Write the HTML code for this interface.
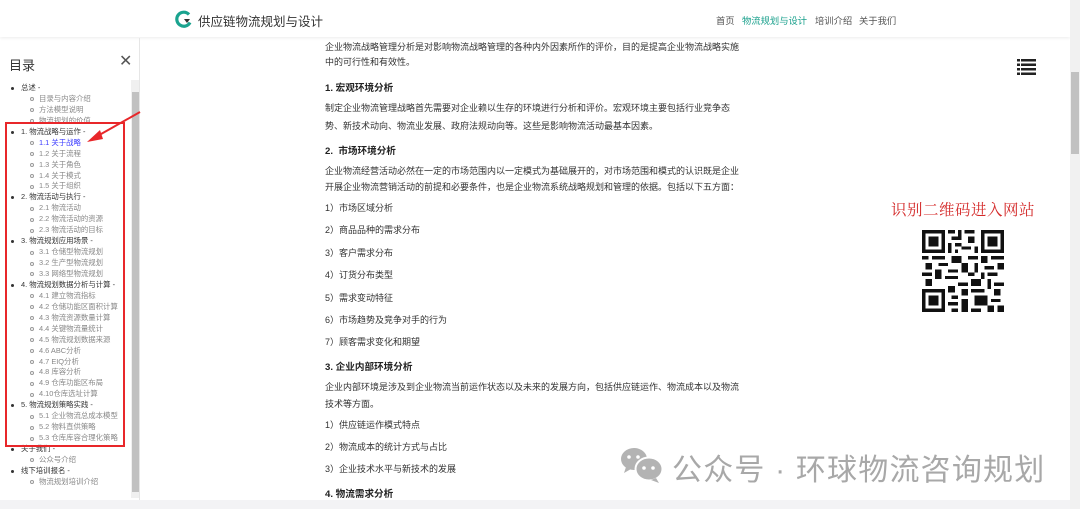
<!DOCTYPE html>
<html><head><meta charset="utf-8"><style>
*{margin:0;padding:0;box-sizing:border-box}
body{width:1080px;height:509px;overflow:hidden;background:#fff;font-family:"Liberation Sans","Noto Sans CJK SC",sans-serif;position:relative;color:#333}
.a{position:absolute;white-space:nowrap}
.hdr{position:absolute;left:0;top:0;width:1070px;height:37px;background:#fff;box-shadow:0 1px 3px rgba(0,0,0,.08)}
.t{font-size:9px;line-height:12px;color:#333}
.h{font-size:9.6px;font-weight:bold;color:#222}
.s{font-size:7.4px;line-height:10px}
.s1{color:#333}
.dot{position:absolute;width:3px;height:3px;border-radius:50%;background:#333}
.cir{position:absolute;width:4px;height:4px;border-radius:50%;border:1px solid #999}
</style></head><body>
<div class="hdr"></div>
<svg class="a" style="left:175px;top:10px" width="18" height="18" viewBox="0 0 18 18"><path d="M14 4.5A7 7 0 1 0 15 12.5" fill="none" stroke="#1aa38f" stroke-width="3.2"/><path d="M9 9h6l-3 4z" fill="#333"/></svg>
<div class="a" style="left:198px;top:11px;font-size:12.5px;color:#333">供应链物流规划与设计</div>
<div class="a" style="left:716px;top:13px;font-size:9.3px;color:#555">首页</div>
<div class="a" style="left:742px;top:13px;font-size:9.3px;color:#19a08c">物流规划与设计</div>
<div class="a" style="left:815px;top:13px;font-size:9.3px;color:#555">培训介绍</div>
<div class="a" style="left:859px;top:13px;font-size:9.3px;color:#555">关于我们</div>

<!-- sidebar -->
<div class="a" style="left:139px;top:38px;width:1px;height:462px;background:#e6e6e6"></div>
<div class="a" style="left:9px;top:55px;font-size:13px;color:#333">目录</div>
<div class="a" style="left:119px;top:54px;font-size:16px;color:#555;line-height:16px">✕</div>
<div class="a" style="left:131px;top:80px;width:8px;height:418px;background:#f0f0f0"></div>
<div class="a" style="left:132px;top:92px;width:7px;height:400px;background:#c1c1c1"></div>
<div id="toc"></div>
<div class="a" style="left:5px;top:122px;width:120px;height:325px;border:2px solid #e8272a"></div>
<svg class="a" style="left:84px;top:108px" width="60" height="40"><line x1="56" y1="4" x2="10" y2="30" stroke="#e8272a" stroke-width="2"/><path d="M3 34 L16 22 L19 31 Z" fill="#e8272a"/></svg>

<!-- main -->
<div class="a t" style="left:325px;top:41px">企业物流战略管理分析是对影响物流战略管理的各种内外因素所作的评价，目的是提高企业物流战略实施</div>
<div class="a t" style="left:325px;top:56px">中的可行性和有效性。</div>
<div class="a h" style="left:325px;top:80px">1. 宏观环境分析</div>
<div class="a t" style="left:325px;top:102px">制定企业物流管理战略首先需要对企业赖以生存的环境进行分析和评价。宏观环境主要包括行业竞争态</div>
<div class="a t" style="left:325px;top:120px">势、新技术动向、物流业发展、政府法规动向等。这些是影响物流活动最基本因素。</div>
<div class="a h" style="left:325px;top:143px">2. &nbsp;市场环境分析</div>
<div class="a t" style="left:325px;top:165px">企业物流经营活动必然在一定的市场范围内以一定模式为基础展开的，对市场范围和模式的认识既是企业</div>
<div class="a t" style="left:325px;top:181px">开展企业物流营销活动的前提和必要条件，也是企业物流系统战略规划和管理的依据。包括以下五方面：</div>
<div class="a t" style="left:325px;top:202px">1）市场区域分析</div>
<div class="a t" style="left:325px;top:224px">2）商品品种的需求分布</div>
<div class="a t" style="left:325px;top:247px">3）客户需求分布</div>
<div class="a t" style="left:325px;top:269px">4）订货分布类型</div>
<div class="a t" style="left:325px;top:292px">5）需求变动特征</div>
<div class="a t" style="left:325px;top:314px">6）市场趋势及竞争对手的行为</div>
<div class="a t" style="left:325px;top:336px">7）顾客需求变化和期望</div>
<div class="a h" style="left:325px;top:359px">3. 企业内部环境分析</div>
<div class="a t" style="left:325px;top:381px">企业内部环境是涉及到企业物流当前运作状态以及未来的发展方向，包括供应链运作、物流成本以及物流</div>
<div class="a t" style="left:325px;top:398px">技术等方面。</div>
<div class="a t" style="left:325px;top:419px">1）供应链运作模式特点</div>
<div class="a t" style="left:325px;top:441px">2）物流成本的统计方式与占比</div>
<div class="a t" style="left:325px;top:463px">3）企业技术水平与新技术的发展</div>
<div class="a h" style="left:325px;top:486px">4. 物流需求分析</div>

<!-- right -->
<svg class="a" style="left:1017px;top:59px" width="19" height="16"><g fill="#222"><rect x="0" y="0" width="3" height="2.5"/><rect x="4" y="0" width="15" height="2.5"/><rect x="0" y="4.5" width="3" height="2.5"/><rect x="4" y="4.5" width="15" height="2.5"/><rect x="0" y="9" width="3" height="2.5"/><rect x="4" y="9" width="15" height="2.5"/><rect x="0" y="13.5" width="3" height="2.5"/><rect x="4" y="13.5" width="15" height="2.5"/></g></svg>
<div class="a" style="left:891px;top:198px;font-size:15.5px;color:#d42a2a;font-family:'Liberation Serif','Noto Serif CJK SC',serif;letter-spacing:0.5px">识别二维码进入网站</div>
<svg class="a" style="left:922px;top:230px" width="82" height="82" viewBox="0 0 25 25" shape-rendering="crispEdges">
<rect width="25" height="25" fill="#fff"/>
<g fill="#111"><path d="M0 0h7v7h-7zM18 0h7v7h-7zM0 18h7v7h-7z"/></g>
<g fill="#fff"><path d="M1 1h5v5h-5zM19 1h5v5h-5zM1 19h5v5h-5z"/></g>
<g fill="#111"><path d="M2 2h3v3h-3zM20 2h3v3h-3zM2 20h3v3h-3z"/>
<path d="M8 0h2v1h-2zM11 0h1v2h-1zM13 0h3v1h-3zM9 2h3v1h-3zM14 2h2v2h-2zM8 4h1v3h-1zM10 4h2v1h-2zM12 5h3v1h-3zM16 5h1v2h-1zM10 6h1v1h-1zM0 8h2v1h-2zM3 8h4v1h-4zM9 8h3v2h-3zM14 8h3v1h-3zM18 8h2v2h-2zM21 8h4v1h-4zM1 10h2v2h-2zM5 10h3v1h-3zM12 10h2v3h-2zM16 10h1v3h-1zM19 11h3v1h-3zM23 10h2v2h-2zM0 13h3v1h-3zM4 12h2v3h-2zM8 12h3v1h-3zM14 13h2v1h-2zM18 13h1v2h-1zM20 13h3v1h-3zM1 15h2v2h-2zM7 14h4v1h-4zM11 16h3v1h-3zM15 15h3v2h-3zM20 15h1v3h-1zM22 16h3v1h-3zM8 17h2v2h-2zM12 18h2v2h-2zM15 18h4v1h-4zM22 18h2v2h-2zM9 20h2v1h-2zM16 20h4v3h-4zM17 21h2v1h-2zM21 21h3v1h-3zM8 22h3v1h-3zM12 21h2v4h-2zM9 24h2v1h-2zM15 24h3v1h-3zM20 23h2v2h-2zM23 23h2v2h-2z"/></g>
</svg>
<div class="a" style="left:1070px;top:0;width:10px;height:509px;background:#f1f1f1"></div>
<div class="a" style="left:1071px;top:72px;width:8px;height:82px;background:#c1c1c1"></div>
<div class="a" style="left:0;top:500px;width:1070px;height:9px;background:#f3f3f5"></div>

<!-- watermark -->
<svg class="a" style="left:620px;top:447px" width="44" height="36" viewBox="0 0 44 36"><ellipse cx="14" cy="12" rx="13" ry="11" fill="#b3b3b3"/><path d="M6 20l-2 6 7-4z" fill="#b3b3b3"/><ellipse cx="29" cy="22" rx="13.5" ry="11.5" fill="#b3b3b3" stroke="#fff" stroke-width="2"/><path d="M36 31l3 5-8-3z" fill="#b3b3b3"/><circle cx="9" cy="10" r="1.8" fill="#fff"/><circle cx="18" cy="10" r="1.8" fill="#fff"/><circle cx="24" cy="21" r="1.8" fill="#fff"/><circle cx="33" cy="21" r="1.8" fill="#fff"/></svg>
<div class="a" style="left:672px;top:445px;font-size:30px;color:#a8a8a8;letter-spacing:1.2px">公众号 · 环球物流咨询规划</div>

<script>
var items=[[0,"总述 -"],[1,"目录与内容介绍"],[1,"方法模型说明"],[1,"物流规划的价值"],[0,"1. 物流战略与运作 -"],[2,"1.1 关于战略"],[1,"1.2 关于流程"],[1,"1.3 关于角色"],[1,"1.4 关于模式"],[1,"1.5 关于组织"],[0,"2. 物流活动与执行 -"],[1,"2.1 物流活动"],[1,"2.2 物流活动的资源"],[1,"2.3 物流活动的目标"],[0,"3. 物流规划应用场景 -"],[1,"3.1 仓储型物流规划"],[1,"3.2 生产型物流规划"],[1,"3.3 网络型物流规划"],[0,"4. 物流规划数据分析与计算 -"],[1,"4.1 建立物流指标"],[1,"4.2 仓储功能区面积计算"],[1,"4.3 物流资源数量计算"],[1,"4.4 关键物流量统计"],[1,"4.5 物流规划数据来源"],[1,"4.6 ABC分析"],[1,"4.7 EIQ分析"],[1,"4.8 库容分析"],[1,"4.9 仓库功能区布局"],[1,"4.10仓库选址计算"],[0,"5. 物流规划策略实践 -"],[1,"5.1 企业物流总成本模型"],[1,"5.2 物料直供策略"],[1,"5.3 仓库库容合理化策略"],[0,"关于我们 -"],[1,"公众号介绍"],[0,"线下培训报名 -"],[1,"物流规划培训介绍"]];
var h="";items.forEach(function(it,i){var y=83+i*10.94;if(it[0]==0){h+='<div class="dot" style="left:11px;top:'+(y+4)+'px"></div><div class="a s s1" style="left:21px;top:'+y+'px">'+it[1]+'</div>';}else{h+='<div class="cir" style="left:30px;top:'+(y+3.5)+'px"></div><div class="a s" style="left:39px;top:'+y+'px;color:'+(it[0]==2?'#3b3bff':'#888')+'">'+it[1]+'</div>';}});
document.getElementById('toc').innerHTML=h;
</script>
</body></html>
